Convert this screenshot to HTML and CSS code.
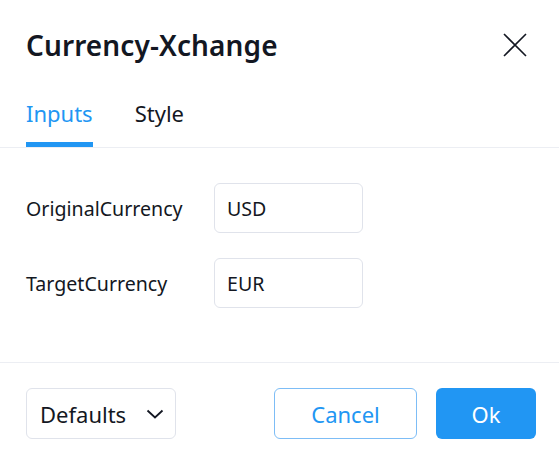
FILE: index.html
```html
<!DOCTYPE html>
<html>
<head>
<meta charset="utf-8">
<link rel="stylesheet" href="styles.css">
</head>
<body>
<div class="dialog">
  <div class="header">
    <div class="title">Currency-Xchange</div>
    <div class="close">
      <svg width="24" height="24" viewBox="0 0 24 24"><path d="M1 1L23 23M23 1L1 23" stroke="#131722" stroke-width="1.6" fill="none"/></svg>
    </div>
  </div>
  <div class="tabs">
    <div class="tab active">Inputs</div>
    <div class="tab">Style</div>
  </div>
  <div class="content">
    <div class="row">
      <div class="label">OriginalCurrency</div>
      <div class="input">USD</div>
    </div>
    <div class="row">
      <div class="label">TargetCurrency</div>
      <div class="input">EUR</div>
    </div>
  </div>
  <div class="footer">
    <div class="defaults">
      <span>Defaults</span>
      <svg width="18" height="10" viewBox="0 0 18 10"><path d="M1.5 1.5L9 8.5L16.5 1.5" stroke="#131722" stroke-width="1.8" fill="none"/></svg>
    </div>
    <div class="actions">
      <div class="btn cancel">Cancel</div>
      <div class="btn ok">Ok</div>
    </div>
  </div>
</div>
</body>
</html>
```

FILE: styles.css
```css
* { box-sizing: border-box; }
html, body { margin: 0; padding: 0; background: #fff; }
body {
  width: 559px;
  height: 462px;
  font-family: "Noto Sans", "Open Sans", sans-serif;
  color: #131722;
}
.dialog { display: flex; flex-direction: column; width: 559px; height: 462px; }
.header {
  height: 90px;
  display: flex;
  align-items: center;
  justify-content: space-between;
  padding: 0 32px 0 26px;
}
.title { font-size: 28px; font-weight: 600; letter-spacing: 0.1px; line-height: 34px; }
.close { width: 24px; height: 24px; display: flex; }
.tabs {
  display: flex;
  gap: 42px;
  padding: 0 26px;
  border-bottom: 1.5px solid #eceef3;
}
.tab {
  height: 57px;
  font-size: 22px;
  line-height: 30px;
  padding-top: 8px;
  border-bottom: 5px solid transparent;
}
.tab.active { color: #2196f3; border-bottom-color: #2196f3; }
.content {
  display: flex;
  flex-direction: column;
  gap: 25px;
  padding: 35px 26px 54px;
  border-bottom: 1.5px solid #eceef3;
}
.row { display: flex; align-items: center; }
.label { width: 188px; font-size: 19.6px; }
.input {
  width: 149px;
  height: 50px;
  border: 1.4px solid #e0e3eb;
  border-radius: 6px;
  padding-left: 12px;
  display: flex;
  align-items: center;
  font-size: 19.6px;
}
.footer {
  display: flex;
  justify-content: space-between;
  align-items: center;
  padding: 25px 23px 0 26px;
}
.defaults {
  width: 150px;
  height: 51px;
  border: 1.4px solid #e0e3eb;
  border-radius: 6px;
  display: flex;
  align-items: center;
  justify-content: space-between;
  padding: 0 11px 0 13px;
  font-size: 22px;
}
.actions { display: flex; gap: 19px; }
.btn {
  height: 51px;
  border-radius: 6px;
  display: flex;
  align-items: center;
  justify-content: center;
  font-size: 22px;
}
.cancel { width: 143px; border: 1.4px solid #7dbdf6; color: #2196f3; }
.ok { width: 100px; background: #2196f3; color: #fff; }
```
